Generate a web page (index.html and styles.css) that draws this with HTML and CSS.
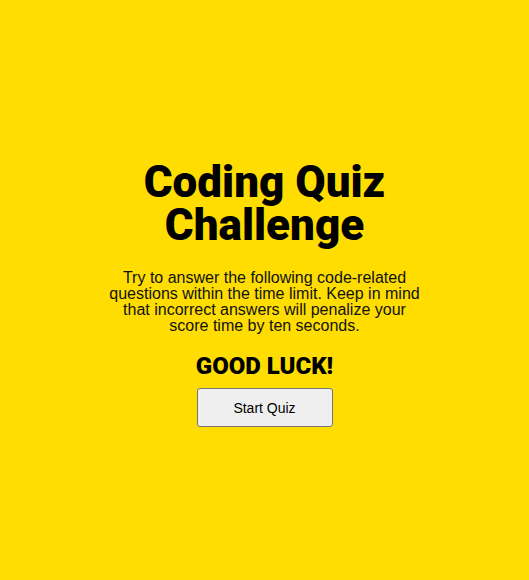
FILE: index.html
```html
<!DOCTYPE html>
<html>
<head>
<meta charset="utf-8">
<link rel="stylesheet" href="styles.css">
</head>
<body>
<main class="page">
  <section class="intro">
    <h1 class="title">Coding Quiz Challenge</h1>
    <p class="desc">Try to answer the following code-related questions within the time limit. Keep in mind that incorrect answers will penalize your score time by ten seconds.</p>
    <h2 class="luck">GOOD LUCK!</h2>
    <button class="start">Start Quiz</button>
  </section>
</main>
</body>
</html>
```
FILE: styles.css
```css
html, body {
  margin: 0;
  padding: 0;
  background: #ffdd00;
}
.page {
  box-sizing: border-box;
  height: 580px;
  padding-top: 161px;
  display: flex;
  justify-content: center;
  align-items: flex-start;
}
.intro {
  width: 320px;
  display: flex;
  flex-direction: column;
  align-items: center;
  text-align: center;
  color: #000;
}
.title {
  font-family: Roboto, sans-serif;
  font-weight: 900;
  font-size: 44px;
  line-height: 43px;
  margin: 0 0 23px;
}
.desc {
  font-family: "Liberation Sans", Arial, sans-serif;
  font-size: 16px;
  line-height: 16px;
  margin: 0 0 18px;
  color: #111;
}
.luck {
  font-family: Roboto, sans-serif;
  font-weight: 900;
  font-size: 24px;
  line-height: 28px;
  margin: 0 0 8px;
}
.start {
  width: 136px;
  height: 39px;
  font-family: "Liberation Sans", Arial, sans-serif;
  font-size: 14px;
  background: #efefef;
  border: 1px solid #767676;
  border-radius: 3px;
  color: #000;
}
```
